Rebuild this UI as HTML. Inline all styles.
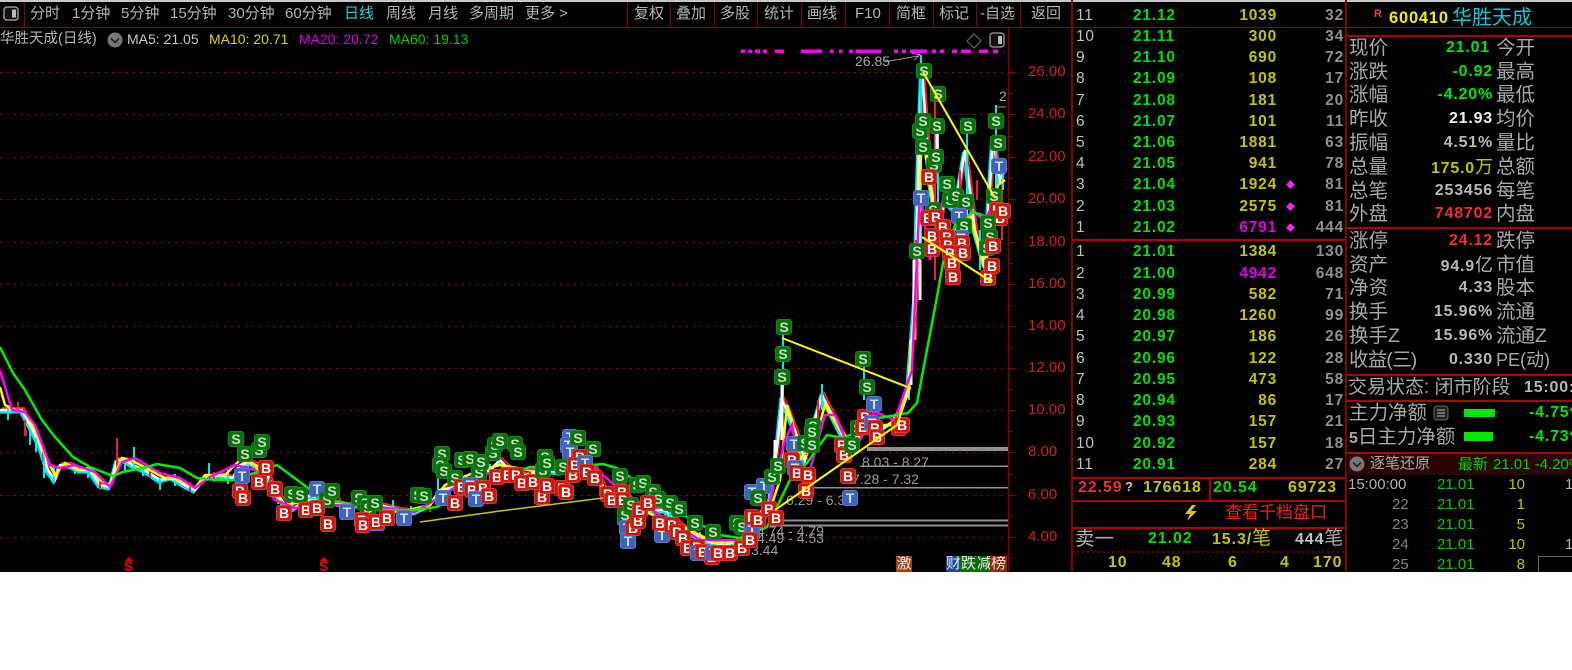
<!DOCTYPE html>
<html><head><meta charset="utf-8"><style>
html,body{margin:0;padding:0;background:#fff}
#p{position:absolute;left:0;top:0;width:1572px;height:670px;overflow:hidden;background:#fff;font-family:"Liberation Sans","WenQuanYi Zen Hei","Noto Sans CJK SC",sans-serif}
#k{position:absolute;left:0;top:0;width:1572px;height:572px;background:#000;overflow:hidden}
.l{position:absolute;background:#8c0000}
.t{position:absolute;white-space:nowrap;line-height:20px;height:20px}
.tb{font-size:15px;color:#b4b4b4;top:4px}
.ra{transform:translateX(-100%)}
.ax{position:absolute;left:1028px;font-size:15px;line-height:20px;color:#d02020}
.ob{position:absolute;left:1073px;width:272px;height:20px;font-size:15.5px;font-weight:bold;line-height:20px;letter-spacing:.8px}
.ob i{position:absolute;font-style:normal;white-space:nowrap}
.ob i:nth-child(1){left:3px;color:#c0c0c0;font-weight:normal}
.ob i:nth-child(2){left:60px;color:#00e000}
.ob i:nth-child(3){right:68px;color:#c4c400}
.ob i:nth-child(4){right:1px;color:#909090}
.ob b{position:absolute;left:213px;color:#ff20ff;font-size:9px}
.mg i:nth-child(3){color:#e000e0}
.c{position:absolute;font-size:19.5px;line-height:24px;color:#a8a8a8;white-space:nowrap;left:1349px}
.c2{left:1496px}
.v{position:absolute;font-size:16px;font-weight:bold;line-height:24px;white-space:nowrap;transform:translateX(-100%);left:1493px;color:#b8b8b8;letter-spacing:.8px}
.tk{position:absolute;font-size:15px;line-height:20px;white-space:nowrap;color:#00d000}
.m{position:absolute;width:14px;height:14px;margin:-8px 0 0 -8px;border-radius:3px;font:bold 14px/14px "Liberation Sans",sans-serif;text-align:center;font-style:normal;border:1px solid}
.S{background:#0b6f0b;border-color:#128a18;color:#c8dcc8}
.B{background:#c8180c;border-color:#e03828;color:#fff}
.T{background:#3c64bc;border-color:#5578d0;color:#d0e0f0}
.lb{position:absolute;font-size:14px;line-height:16px;color:#9a9a9a;white-space:nowrap}
.ch{position:absolute;top:556px;height:16px;font-size:15px;line-height:16px;color:#e8e8e8;text-align:center;overflow:hidden}
.bn{position:absolute;line-height:20px;height:20px;white-space:nowrap;font-size:16px;font-weight:bold;letter-spacing:.9px}
</style></head><body><div id="p"><div id="k">
<div style="position:absolute;left:0;top:0;width:1572px;height:2px;background:#c8c8c8"></div>
<div class="l" style="left:0;top:27px;width:1572px;height:1px"></div>
<div class="l" style="left:24px;top:3px;width:1px;height:24px"></div>
<svg style="position:absolute;left:3px;top:6px" width="17" height="17"><rect x="1" y="1" width="14" height="13" rx="3" fill="#111" stroke="#999" stroke-width="1.5"/><rect x="9" y="3.5" width="4" height="8" fill="#bbb"/></svg>
<span class="t tb" style="left:30px">分时</span><span class="t tb" style="left:72px">1分钟</span><span class="t tb" style="left:121px">5分钟</span><span class="t tb" style="left:170px">15分钟</span><span class="t tb" style="left:228px">30分钟</span><span class="t tb" style="left:285px">60分钟</span><span class="t tb" style="left:344px;color:#20d8d8">日线</span><span class="t tb" style="left:386px">周线</span><span class="t tb" style="left:428px">月线</span><span class="t tb" style="left:469px">多周期</span><span class="t tb" style="left:525px">更多 &gt;</span>
<div class="l" style="left:627px;top:3px;width:1px;height:24px"></div><div class="l" style="left:670px;top:3px;width:1px;height:24px"></div><div class="l" style="left:714px;top:3px;width:1px;height:24px"></div><div class="l" style="left:757px;top:3px;width:1px;height:24px"></div><div class="l" style="left:801px;top:3px;width:1px;height:24px"></div><div class="l" style="left:845px;top:3px;width:1px;height:24px"></div><div class="l" style="left:889px;top:3px;width:1px;height:24px"></div><div class="l" style="left:933px;top:3px;width:1px;height:24px"></div><div class="l" style="left:976px;top:3px;width:1px;height:24px"></div><div class="l" style="left:1020px;top:3px;width:1px;height:24px"></div>
<span class="t tb" style="left:634px">复权</span><span class="t tb" style="left:676px">叠加</span><span class="t tb" style="left:720px">多股</span><span class="t tb" style="left:764px">统计</span><span class="t tb" style="left:807px">画线</span><span class="t tb" style="left:855px">F10</span><span class="t tb" style="left:896px">简框</span><span class="t tb" style="left:939px">标记</span><span class="t tb" style="left:980px">-自选</span><span class="t tb" style="left:1031px">返回</span>

<span class="t" style="left:0;top:29px;font-size:14.5px;color:#b4b4b4">华胜天成(日线)</span>
<svg style="position:absolute;left:107px;top:32px" width="16" height="16"><circle cx="8" cy="8" r="7.5" fill="#777"/><path d="M4 6.5L8 10.5L12 6.5" fill="none" stroke="#222" stroke-width="1.6"/></svg>
<span class="t" style="left:127px;top:29px;font-size:14px;color:#c8c8c8">MA5: 21.05</span>
<span class="t" style="left:209px;top:29px;font-size:14px;color:#d8d800">MA10: 20.71</span>
<span class="t" style="left:299px;top:29px;font-size:14px;color:#e000e0">MA20: 20.72</span>
<span class="t" style="left:389px;top:29px;font-size:14px;color:#00d000">MA60: 19.13</span>

<svg style="position:absolute;left:0;top:0" width="1072" height="572">
<g stroke="#a00000" stroke-width="1" stroke-dasharray="2 5"><path d="M0 72.5H1008M0 114.5H1008M0 157.5H1008M0 199.5H1008M0 242.5H1008M0 284.5H1008M0 326.5H1008M0 368.5H1008M0 410.5H1008M0 452.5H1008M0 495.5H1008M0 537.5H1008"/></g>
<path d="M1008.5 28V572" stroke="#8c0000" stroke-width="1.5"/>
<path d="M1008 72.5h8M1008 93.5h5M1008 114.5h8M1008 136.5h5M1008 157.5h8M1008 178.5h5M1008 199.5h8M1008 221.5h5M1008 242.5h8M1008 263.5h5M1008 284.5h8M1008 305.5h5M1008 326.5h8M1008 347.5h5M1008 368.5h8M1008 389.5h5M1008 410.5h8M1008 431.5h5M1008 452.5h8M1008 474.5h5M1008 495.5h8M1008 516.5h5M1008 537.5h8M1008 558.5h5" stroke="#8c0000" stroke-width="1"/>
<g fill="#ff00ff"><rect x="741" y="49.5" width="4" height="3.5"/><rect x="748" y="49.5" width="4" height="3.5"/><rect x="755" y="49.5" width="5" height="3.5"/><rect x="763" y="49.5" width="4" height="3.5"/><rect x="775" y="49.5" width="9" height="3.5"/><rect x="801" y="49.5" width="21" height="3.5"/><rect x="830" y="49.5" width="3.5" height="3.5"/><rect x="839" y="49.5" width="3.5" height="3.5"/><rect x="849" y="49.5" width="4" height="3.5"/><rect x="856" y="49.5" width="25" height="3.5"/><rect x="894" y="49.5" width="4" height="3.5"/><rect x="902" y="49.5" width="4" height="3.5"/><rect x="910" y="49.5" width="17" height="3.5"/><rect x="932" y="49.5" width="4" height="3.5"/><rect x="940" y="49.5" width="4" height="3.5"/><rect x="952" y="49.5" width="5" height="3.5"/><rect x="961" y="49.5" width="10" height="3.5"/><rect x="979" y="49.5" width="9" height="3.5"/><rect x="993" y="49.5" width="5" height="3.5"/></g>
<path d="M974 34L981 41L974 48L967 41Z" fill="none" stroke="#666" stroke-width="1.2"/>
<rect x="990" y="33" width="14" height="14" rx="3" fill="#111" stroke="#888" stroke-width="1.5"/><rect x="998" y="36" width="4" height="8" fill="#bbb"/>
<g fill="#8f8f8f"><rect x="867" y="447" width="141" height="4"/><rect x="860" y="465.5" width="148" height="1.5"/><rect x="812" y="487" width="196" height="1.5"/><rect x="770" y="519.5" width="238" height="2"/><rect x="770" y="524.5" width="238" height="2"/></g>
<path d="M0 410L15 410L22 410L30 425L40 445L48 470L55 480L60 465L70 465L80 470L90 470L100 485L110 487L117 460L125 460L133 465L145 470L160 480L172 477L185 485L195 490L205 478L220 475L233 478L240 465L250 462L265 470L275 490L285 505L295 508L310 495L325 500L345 505L365 505L380 505L400 510L415 512L430 505L440 490L455 487L470 480L490 470L500 460L510 470L525 475L545 470L560 472L580 465L595 468L605 490L620 500L635 515L650 510L665 510L680 525L695 535L710 542L725 545L740 540L755 520L770 500L778 440L782 400L787 410L795 430L805 460L815 420L822 395L835 420L845 440L855 440L865 420L880 430L895 420L908 390L915 300L919 150L922 70L930 180L938 230L945 200L955 210L965 150L975 230L985 265L993 140L1000 180L1005 170" fill="none" stroke="#00e8f0" stroke-width="3" transform="translate(-1.5,2)"/>
<path d="M0 410L15 410L22 410L30 425L40 445L48 470L55 480L60 465L70 465L80 470L90 470L100 485L110 487L117 460L125 460L133 465L145 470L160 480L172 477L185 485L195 490L205 478L220 475L233 478L240 465L250 462L265 470L275 490L285 505L295 508L310 495L325 500L345 505L365 505L380 505L400 510L415 512L430 505L440 490L455 487L470 480L490 470L500 460L510 470L525 475L545 470L560 472L580 465L595 468L605 490L620 500L635 515L650 510L665 510L680 525L695 535L710 542L725 545L740 540L755 520L770 500L778 440L782 400L787 410L795 430L805 460L815 420L822 395L835 420L845 440L855 440L865 420L880 430L895 420L908 390L915 300L919 150L922 70L930 180L938 230L945 200L955 210L965 150L975 230L985 265L993 140L1000 180L1005 170" fill="none" stroke="#f02020" stroke-width="2" transform="translate(2,-2)"/>
<path d="M0 410L15 410L22 410L30 425L40 445L48 470L55 480L60 465L70 465L80 470L90 470L100 485L110 487L117 460L125 460L133 465L145 470L160 480L172 477L185 485L195 490L205 478L220 475L233 478L240 465L250 462L265 470L275 490L285 505L295 508L310 495L325 500L345 505L365 505L380 505L400 510L415 512L430 505L440 490L455 487L470 480L490 470L500 460L510 470L525 475L545 470L560 472L580 465L595 468L605 490L620 500L635 515L650 510L665 510L680 525L695 535L710 542L725 545L740 540L755 520L770 500L778 440L782 400L787 410L795 430L805 460L815 420L822 395L835 420L845 440L855 440L865 420L880 430L895 420L908 390L915 300L919 150L922 70L930 180L938 230L945 200L955 210L965 150L975 230L985 265L993 140L1000 180L1005 170" fill="none" stroke="#fff" stroke-width="2.5"/>
<g fill="none" stroke-width="2">
<g stroke="#f02020"><path d="M117 438V470M26 430V436M18 402V412M25 420V436M43 450V462M68 462V470M100 478V490M150 468V478M190 482V492M214 472V482M270 478V488M340 498V508M430 498V512M475 468V480M530 466V476M560 462V476M600 482V496M782 380V420M818 400V420M916 240V340M935 100V280M1002 180V240M977 180V200M960 170V240M806 440V455"/></g>
<g stroke="#00e8f0"><path d="M134 447V470M8 405V420M30 428V445M36 438V452M44 452V478M54 465V482M75 465V474M88 468V478M125 460V472M143 465V476M160 478V490M175 474V486M209 463V480M228 470V484M248 455V468M278 490V504M292 500V512M327 498V508M393 500V512M411 506V516M438 478V494M455 482V494M490 464V476M520 470V482M578 458V470M612 490V504M640 505V516M670 512V522M700 532V545M783 330V395M822 384V410M864 360V400M921 55V250M938 130V210M967 130V240M996 105V200M1003 160V190M909 380V400M980 230V270"/></g>
<g stroke="#fff" stroke-width="3"><path d="M782 385V440M919 150V260M914 260V340M911 340V385M937 130V160M920 260V300M966 200V225M775 440V470"/></g>
</g>
<path d="M0 387L5 405L15 410L25 412L35 430L45 455L55 475L65 463L78 470L90 468L100 480L110 485L122 458L135 462L150 470L165 478L180 480L195 488L205 475L225 475L240 460L255 465L270 488L285 505L310 500L345 505L400 512L430 505L445 485L480 470L500 465L540 472L580 465L600 485L640 510L680 525L715 543L745 540L770 510L780 480L787 405L792 420L800 460L815 440L825 405L840 430L855 445L865 425L890 425L908 395L915 310L922 130L935 220L950 235L970 215L985 270L998 185L1005 180" fill="none" stroke="#ffff00" stroke-width="2.5"/>
<path d="M0 370L12 410L25 412L35 425L50 465L60 468L75 465L95 472L110 487L122 462L135 458L160 473L180 478L195 488L210 477L235 465L255 470L275 500L295 508L330 505L380 507L415 512L435 500L470 478L510 468L560 470L595 468L620 490L660 515L700 540L745 540L765 520L785 440L792 425L800 470L810 470L825 415L835 415L850 450L860 440L875 412L895 420L912 370L920 190L930 260L945 190L970 210L985 220L995 200" fill="none" stroke="#ff00ff" stroke-width="2.5"/>
<path d="M0 347L13 373L25 390L42 420L55 437L73 457L90 467L113 476L123 472L147 467L157 464L180 468L197 478L217 480L233 480L258 472L277 465L308 488L320 500L340 502L377 510L413 510L437 507L487 482L530 467L570 467L603 464L617 468L653 493L687 517L720 535L740 538L767 527L790 480L807 463L827 435L843 438L857 432L867 420L908 413L917 403L927 350L937 297L943 263L955 225L973 212L997 220" fill="none" stroke="#00f000" stroke-width="2.5"/>
<path d="M884 62L918 56M912 53L920 55L914 60" fill="none" stroke="#999" stroke-width="1"/>
<path d="M996 107H1006" stroke="#999" stroke-width="1"/>
<g fill="#f00000"><path d="M129 557l4 4h-8zM324 557l4 4h-8z"/></g>
</svg>
<span class="lb" style="left:855px;top:53px;color:#a8a8a8">26.85</span>
<span class="lb" style="left:999px;top:88px;color:#a8a8a8">2</span>
<span class="lb" style="left:862px;top:454px">8.03 - 8.27</span>
<span class="lb" style="left:852px;top:471px">7.28 - 7.32</span>
<span class="lb" style="left:786px;top:492px">6.29 - 6.3</span>
<span class="lb" style="left:757px;top:523px">4.74 - 4.79</span>
<span class="lb" style="left:757px;top:530px">4.49 - 4.53</span>
<span class="lb" style="left:751px;top:542px">3.44</span>
<span class="t" style="left:124px;top:556px;font-size:14px;font-weight:bold;color:#f00000">S</span>
<span class="t" style="left:319px;top:556px;font-size:14px;font-weight:bold;color:#f00000">S</span>
<div class="ch" style="left:896px;width:16px;background:#a04010">激</div>
<div class="ch" style="left:946px;width:14px;background:#1a4a90">财</div>
<div class="ch" style="left:960px;width:17px;background:#106a10">跌</div>
<div class="ch" style="left:977px;width:13px;background:#106a10">减</div>
<div class="ch" style="left:990px;width:17px;background:#902810">榜</div>
<div id="mk">
<i class="m S" style="left:236px;top:439px">S</i><i class="m S" style="left:259px;top:450px">S</i><i class="m S" style="left:245px;top:454px">S</i><i class="m S" style="left:262px;top:442px">S</i><i class="m B" style="left:240px;top:491px">B</i><i class="m T" style="left:242px;top:476px">T</i><i class="m B" style="left:243px;top:498px">B</i><i class="m B" style="left:259px;top:482px">B</i><i class="m B" style="left:266px;top:468px">B</i><i class="m B" style="left:275px;top:489px">B</i><i class="m S" style="left:292px;top:494px">S</i><i class="m S" style="left:300px;top:495px">S</i><i class="m T" style="left:317px;top:489px">T</i><i class="m S" style="left:327px;top:500px">S</i><i class="m S" style="left:332px;top:491px">S</i><i class="m B" style="left:284px;top:513px">B</i><i class="m B" style="left:306px;top:510px">B</i><i class="m B" style="left:317px;top:508px">B</i><i class="m B" style="left:328px;top:524px">B</i>
<i class="m S" style="left:359px;top:498px">S</i><i class="m S" style="left:365px;top:503px">S</i><i class="m S" style="left:368px;top:508px">S</i><i class="m S" style="left:375px;top:503px">S</i><i class="m T" style="left:347px;top:512px">T</i><i class="m B" style="left:362px;top:520px">B</i><i class="m B" style="left:363px;top:525px">B</i><i class="m T" style="left:377px;top:523px">T</i><i class="m B" style="left:376px;top:522px">B</i><i class="m B" style="left:387px;top:518px">B</i><i class="m T" style="left:404px;top:518px">T</i><i class="m S" style="left:418px;top:495px">S</i><i class="m S" style="left:424px;top:496px">S</i>
<i class="m S" style="left:442px;top:454px">S</i><i class="m S" style="left:440px;top:465px">S</i><i class="m S" style="left:444px;top:471px">S</i><i class="m S" style="left:455px;top:478px">S</i><i class="m S" style="left:462px;top:460px">S</i><i class="m S" style="left:470px;top:459px">S</i><i class="m S" style="left:479px;top:473px">S</i><i class="m S" style="left:481px;top:462px">S</i><i class="m T" style="left:443px;top:498px">T</i><i class="m B" style="left:455px;top:503px">B</i><i class="m B" style="left:462px;top:487px">B</i><i class="m T" style="left:470px;top:485px">T</i><i class="m B" style="left:472px;top:490px">B</i><i class="m B" style="left:483px;top:488px">B</i><i class="m T" style="left:476px;top:499px">T</i><i class="m B" style="left:489px;top:496px">B</i>
<i class="m S" style="left:493px;top:453px">S</i><i class="m S" style="left:495px;top:445px">S</i><i class="m S" style="left:500px;top:441px">S</i><i class="m S" style="left:515px;top:444px">S</i><i class="m S" style="left:518px;top:452px">S</i><i class="m B" style="left:497px;top:477px">B</i><i class="m B" style="left:508px;top:475px">B</i><i class="m B" style="left:516px;top:475px">B</i><i class="m B" style="left:522px;top:483px">B</i><i class="m B" style="left:533px;top:482px">B</i><i class="m B" style="left:542px;top:497px">B</i><i class="m S" style="left:545px;top:457px">S</i><i class="m S" style="left:543px;top:470px">S</i><i class="m S" style="left:547px;top:463px">S</i><i class="m B" style="left:547px;top:486px">B</i><i class="m B" style="left:562px;top:488px">B</i><i class="m B" style="left:566px;top:492px">B</i>
<i class="m T" style="left:570px;top:437px">T</i><i class="m T" style="left:568px;top:445px">T</i><i class="m T" style="left:570px;top:452px">T</i><i class="m S" style="left:578px;top:438px">S</i><i class="m S" style="left:593px;top:449px">S</i><i class="m S" style="left:563px;top:467px">S</i><i class="m B" style="left:580px;top:457px">B</i><i class="m B" style="left:573px;top:475px">B</i><i class="m B" style="left:575px;top:465px">B</i><i class="m T" style="left:585px;top:463px">T</i><i class="m B" style="left:587px;top:472px">B</i><i class="m B" style="left:595px;top:478px">B</i>
<i class="m S" style="left:620px;top:476px">S</i><i class="m S" style="left:637px;top:485px">S</i><i class="m S" style="left:643px;top:483px">S</i><i class="m S" style="left:653px;top:492px">S</i><i class="m S" style="left:658px;top:499px">S</i><i class="m S" style="left:670px;top:503px">S</i><i class="m S" style="left:679px;top:509px">S</i><i class="m S" style="left:695px;top:523px">S</i><i class="m S" style="left:713px;top:532px">S</i><i class="m S" style="left:737px;top:523px">S</i><i class="m S" style="left:742px;top:527px">S</i>
<i class="m B" style="left:608px;top:494px">B</i><i class="m B" style="left:612px;top:500px">B</i><i class="m B" style="left:622px;top:492px">B</i><i class="m B" style="left:623px;top:500px">B</i><i class="m T" style="left:625px;top:518px">T</i><i class="m S" style="left:625px;top:515px">S</i><i class="m T" style="left:627px;top:528px">T</i><i class="m T" style="left:628px;top:541px">T</i><i class="m B" style="left:633px;top:528px">B</i><i class="m B" style="left:638px;top:521px">B</i><i class="m S" style="left:631px;top:505px">S</i><i class="m B" style="left:640px;top:510px">B</i><i class="m B" style="left:648px;top:503px">B</i>
<i class="m T" style="left:662px;top:535px">T</i><i class="m B" style="left:660px;top:523px">B</i><i class="m B" style="left:672px;top:525px">B</i><i class="m B" style="left:677px;top:532px">B</i><i class="m B" style="left:683px;top:538px">B</i><i class="m B" style="left:688px;top:548px">B</i><i class="m B" style="left:697px;top:547px">B</i><i class="m T" style="left:698px;top:553px">T</i><i class="m B" style="left:703px;top:552px">B</i><i class="m B" style="left:712px;top:557px">B</i><i class="m T" style="left:713px;top:553px">T</i><i class="m B" style="left:718px;top:553px">B</i><i class="m B" style="left:730px;top:553px">B</i><i class="m B" style="left:742px;top:548px">B</i>
<i class="m S" style="left:784px;top:327px">S</i><i class="m S" style="left:783px;top:354px">S</i><i class="m S" style="left:782px;top:377px">S</i><i class="m S" style="left:863px;top:359px">S</i><i class="m S" style="left:867px;top:387px">S</i>
<i class="m T" style="left:752px;top:492px">T</i><i class="m T" style="left:764px;top:486px">T</i><i class="m S" style="left:758px;top:498px">S</i><i class="m S" style="left:772px;top:477px">S</i><i class="m S" style="left:778px;top:466px">S</i><i class="m T" style="left:794px;top:444px">T</i><i class="m B" style="left:792px;top:460px">B</i><i class="m T" style="left:795px;top:468px">T</i><i class="m B" style="left:797px;top:473px">B</i><i class="m B" style="left:808px;top:475px">B</i><i class="m B" style="left:806px;top:491px">B</i><i class="m S" style="left:805px;top:443px">S</i><i class="m S" style="left:813px;top:426px">S</i><i class="m S" style="left:812px;top:432px">S</i><i class="m S" style="left:812px;top:445px">S</i>
<i class="m B" style="left:842px;top:445px">B</i><i class="m B" style="left:844px;top:455px">B</i><i class="m B" style="left:848px;top:476px">B</i><i class="m T" style="left:850px;top:498px">T</i><i class="m S" style="left:852px;top:445px">S</i><i class="m S" style="left:858px;top:428px">S</i><i class="m B" style="left:865px;top:417px">B</i><i class="m B" style="left:863px;top:427px">B</i><i class="m T" style="left:872px;top:423px">T</i><i class="m T" style="left:874px;top:404px">T</i><i class="m B" style="left:875px;top:428px">B</i><i class="m B" style="left:877px;top:437px">B</i><i class="m B" style="left:899px;top:428px">B</i><i class="m B" style="left:902px;top:425px">B</i>
<i class="m T" style="left:752px;top:530px">T</i><i class="m B" style="left:752px;top:517px">B</i><i class="m B" style="left:758px;top:520px">B</i><i class="m B" style="left:769px;top:509px">B</i><i class="m B" style="left:776px;top:518px">B</i><i class="m B" style="left:750px;top:540px">B</i>
<i class="m S" style="left:924px;top:71px">S</i><i class="m S" style="left:938px;top:94px">S</i><i class="m S" style="left:920px;top:131px">S</i><i class="m S" style="left:923px;top:121px">S</i><i class="m S" style="left:937px;top:126px">S</i><i class="m S" style="left:923px;top:147px">S</i><i class="m S" style="left:934px;top:165px">S</i><i class="m S" style="left:936px;top:157px">S</i><i class="m S" style="left:968px;top:126px">S</i><i class="m S" style="left:996px;top:121px">S</i><i class="m S" style="left:998px;top:143px">S</i><i class="m B" style="left:929px;top:177px">B</i><i class="m S" style="left:947px;top:184px">S</i><i class="m S" style="left:950px;top:200px">S</i><i class="m S" style="left:956px;top:196px">S</i><i class="m S" style="left:966px;top:202px">S</i><i class="m S" style="left:933px;top:210px">S</i><i class="m T" style="left:921px;top:198px">T</i><i class="m T" style="left:999px;top:166px">T</i><i class="m B" style="left:928px;top:218px">B</i><i class="m B" style="left:936px;top:217px">B</i><i class="m T" style="left:959px;top:216px">T</i><i class="m B" style="left:943px;top:227px">B</i><i class="m S" style="left:964px;top:226px">S</i><i class="m B" style="left:932px;top:236px">B</i><i class="m T" style="left:961px;top:238px">T</i><i class="m B" style="left:947px;top:237px">B</i><i class="m B" style="left:948px;top:245px">B</i><i class="m B" style="left:962px;top:243px">B</i><i class="m B" style="left:932px;top:249px">B</i><i class="m S" style="left:917px;top:251px">S</i><i class="m B" style="left:950px;top:253px">B</i><i class="m B" style="left:963px;top:253px">B</i><i class="m B" style="left:952px;top:263px">B</i><i class="m B" style="left:953px;top:277px">B</i><i class="m S" style="left:994px;top:196px">S</i><i class="m B" style="left:997px;top:210px">B</i><i class="m B" style="left:1000px;top:218px">B</i><i class="m B" style="left:1003px;top:211px">B</i><i class="m S" style="left:988px;top:223px">S</i><i class="m S" style="left:990px;top:237px">S</i><i class="m S" style="left:987px;top:248px">S</i><i class="m B" style="left:993px;top:246px">B</i><i class="m B" style="left:988px;top:278px">B</i><i class="m B" style="left:992px;top:266px">B</i>
</div>
<svg style="position:absolute;left:0;top:0;pointer-events:none" width="1008" height="572"><g fill="none" stroke="#ffff00" stroke-width="2"><path d="M782 338L910 388L897 425L775 510M923 72L995 198M922 237L992 282"/></g><path d="M420 522L500 511L603 498" fill="none" stroke="#c8c800" stroke-width="1.5"/></svg>

<span class="ax" style="top:62px">26.00</span><span class="ax" style="top:104px">24.00</span><span class="ax" style="top:147px">22.00</span><span class="ax" style="top:189px">20.00</span><span class="ax" style="top:232px">18.00</span><span class="ax" style="top:274px">16.00</span><span class="ax" style="top:316px">14.00</span><span class="ax" style="top:358px">12.00</span><span class="ax" style="top:400px">10.00</span><span class="ax" style="top:442px">8.00</span><span class="ax" style="top:485px">6.00</span><span class="ax" style="top:527px">4.00</span>

<div class="l" style="left:1071px;top:0;width:1.5px;height:572px"></div>
<div class="l" style="left:1345px;top:0;width:1.5px;height:572px"></div>
<div class="ob" style="top:6px"><i>11</i><i>21.12</i><i>1039</i><i>32</i></div>
<div class="ob" style="top:27px"><i>10</i><i>21.11</i><i>300</i><i>34</i></div>
<div class="ob" style="top:48px"><i>9</i><i>21.10</i><i>690</i><i>72</i></div>
<div class="ob" style="top:69px"><i>8</i><i>21.09</i><i>108</i><i>17</i></div>
<div class="ob" style="top:91px"><i>7</i><i>21.08</i><i>181</i><i>20</i></div>
<div class="ob" style="top:112px"><i>6</i><i>21.07</i><i>101</i><i>11</i></div>
<div class="ob" style="top:133px"><i>5</i><i>21.06</i><i>1881</i><i>63</i></div>
<div class="ob" style="top:154px"><i>4</i><i>21.05</i><i>941</i><i>78</i></div>
<div class="ob" style="top:175px"><i>3</i><i>21.04</i><i>1924</i><i>81</i><b>◆</b></div>
<div class="ob" style="top:197px"><i>2</i><i>21.03</i><i>2575</i><i>81</i><b>◆</b></div>
<div class="ob mg" style="top:218px"><i>1</i><i>21.02</i><i>6791</i><i>444</i><b>◆</b></div>
<div class="l" style="left:1072px;top:239px;width:273px;height:1.5px;background:#b00000"></div>
<div class="ob" style="top:242px"><i>1</i><i>21.01</i><i>1384</i><i>130</i></div>
<div class="ob mg" style="top:264px"><i>2</i><i>21.00</i><i>4942</i><i>648</i></div>
<div class="ob" style="top:285px"><i>3</i><i>20.99</i><i>582</i><i>71</i></div>
<div class="ob" style="top:306px"><i>4</i><i>20.98</i><i>1260</i><i>99</i></div>
<div class="ob" style="top:327px"><i>5</i><i>20.97</i><i>186</i><i>26</i></div>
<div class="ob" style="top:349px"><i>6</i><i>20.96</i><i>122</i><i>28</i></div>
<div class="ob" style="top:370px"><i>7</i><i>20.95</i><i>473</i><i>58</i></div>
<div class="ob" style="top:391px"><i>8</i><i>20.94</i><i>86</i><i>17</i></div>
<div class="ob" style="top:412px"><i>9</i><i>20.93</i><i>157</i><i>21</i></div>
<div class="ob" style="top:434px"><i>10</i><i>20.92</i><i>157</i><i>18</i></div>
<div class="ob" style="top:455px"><i>11</i><i>20.91</i><i>284</i><i>27</i></div>
<div class="l" style="left:1072px;top:477px;width:273px;height:1.5px;background:#b00000"></div>
<div class="l" style="left:1072px;top:500px;width:273px;height:1.5px;background:#b00000"></div>
<div class="l" style="left:1209px;top:477px;width:1.5px;height:23px;background:#b00000"></div>
<div class="l" style="left:1072px;top:527px;width:273px;height:1.5px;background:#b00000"></div>
<span class="bn" style="left:1078px;top:478px;color:#f03030">22.59</span>
<span class="t" style="left:1125px;top:477px;font-size:13px;font-weight:bold;color:#c8c8c8">?</span>
<span class="bn" style="left:1143px;top:478px;color:#c4c400">176618</span>
<span class="bn" style="left:1213px;top:478px;color:#00e000">20.54</span>
<span class="bn" style="left:1288px;top:478px;color:#c4c400">69723</span>
<svg style="position:absolute;left:1183px;top:504px" width="16" height="18"><path d="M9 1L2 10H7L4 17L14 7H8L13 1Z" fill="#d8c020"/></svg>
<span class="t" style="left:1225px;top:503px;font-size:17px;color:#f02020">查看千档盘口</span>
<span class="t" style="left:1075px;top:529px;font-size:19.5px;color:#b0b0b0">卖一</span>
<span class="bn" style="left:1148px;top:529px;color:#00e000">21.02</span>
<span class="bn" style="left:1212px;top:529px;color:#c4c400">15.3/<span style="font-weight:normal;font-size:19px;letter-spacing:0">笔</span></span>
<span class="bn" style="left:1295px;top:529px;color:#c0c0c0">444<span style="font-weight:normal;font-size:19px;color:#a8a8a8;letter-spacing:0">笔</span></span>
<svg style="position:absolute;left:1072px;top:551px" width="273" height="2"><path d="M0 1H273" stroke="#c00000" stroke-dasharray="2 3"/></svg>
<span class="bn" style="left:1108px;top:553px;color:#c4c400">10</span><span class="bn" style="left:1162px;top:553px;color:#c4c400">48</span><span class="bn" style="left:1228px;top:553px;color:#c4c400">6</span><span class="bn" style="left:1280px;top:553px;color:#c4c400">4</span><span class="bn" style="left:1313px;top:553px;color:#c4c400">170</span>

<span class="t" style="left:1374px;top:4px;font-size:11px;font-weight:bold;color:#f04040">R</span>
<span class="t" style="left:1389px;top:8px;font-size:16.5px;font-weight:bold;color:#f0f000;letter-spacing:.8px">600410</span>
<span class="t" style="left:1452px;top:6px;font-size:20px;line-height:24px;height:24px;color:#10c8d8">华胜天成</span>
<div class="l" style="left:1346px;top:35px;width:226px;height:1.5px;background:#b00000"></div>
<span class="c" style="top:36px">现价</span><span class="c" style="top:60px">涨跌</span><span class="c" style="top:83px">涨幅</span><span class="c" style="top:107px">昨收</span><span class="c" style="top:131px">振幅</span><span class="c" style="top:155px">总量</span><span class="c" style="top:179px">总笔</span><span class="c" style="top:202px">外盘</span>
<span class="c c2" style="top:36px">今开</span><span class="c c2" style="top:60px">最高</span><span class="c c2" style="top:83px">最低</span><span class="c c2" style="top:107px">均价</span><span class="c c2" style="top:131px">量比</span><span class="c c2" style="top:155px">总额</span><span class="c c2" style="top:179px">每笔</span><span class="c c2" style="top:202px">内盘</span>
<span class="v" style="top:36px;left:1490px;color:#00e800">21.01</span><span class="v" style="top:60px;color:#00e800">-0.92</span><span class="v" style="top:83px;color:#00e800">-4.20%</span><span class="v" style="top:107px;color:#f0f0f0">21.93</span><span class="v" style="top:131px">4.51%</span><span class="v" style="top:155px;color:#c4c400">175.0<span style="font-weight:normal;font-size:18px;letter-spacing:0">万</span></span><span class="v" style="top:179px">253456</span><span class="v" style="top:202px;color:#f03030">748702</span>
<div class="l" style="left:1346px;top:227px;width:226px;height:1.5px;background:#b00000"></div>
<span class="c" style="top:229px">涨停</span><span class="c" style="top:253px">资产</span><span class="c" style="top:276px">净资</span><span class="c" style="top:300px">换手</span><span class="c" style="top:324px">换手Z</span><span class="c" style="top:348px;letter-spacing:-.8px">收益(三)</span>
<span class="c c2" style="top:229px">跌停</span><span class="c c2" style="top:253px">市值</span><span class="c c2" style="top:276px">股本</span><span class="c c2" style="top:300px">流通</span><span class="c c2" style="top:324px">流通Z</span><span class="c c2" style="top:348px;font-size:18px">PE(动)</span>
<span class="v" style="top:229px;color:#f03030">24.12</span><span class="v" style="top:253px">94.9<span style="font-weight:normal;font-size:18px;letter-spacing:0">亿</span></span><span class="v" style="top:276px">4.33</span><span class="v" style="top:300px">15.96%</span><span class="v" style="top:324px">15.96%</span><span class="v" style="top:348px">0.330</span>
<div class="l" style="left:1346px;top:374px;width:226px;height:1.5px;background:#b00000"></div>
<span class="c" style="top:376px;left:1348px;font-size:19px">交易状态: 闭市阶段</span>
<span class="v" style="top:376px;left:1524px;transform:none">15:00:</span>
<div class="l" style="left:1346px;top:400px;width:226px;height:1.5px;background:#b00000"></div>
<span class="c" style="top:401px">主力净额</span>
<svg style="position:absolute;left:1433px;top:405px" width="16" height="16"><rect x="1" y="1" width="14" height="14" rx="3" fill="#222" stroke="#666"/><path d="M4 5H12M4 8H12M4 11H12" stroke="#999" stroke-width="1.2"/></svg>
<div style="position:absolute;left:1464px;top:409px;width:31px;height:8px;background:#00e800"></div>
<span class="v" style="top:401px;left:1529px;transform:none;color:#00e800">-4.75亿</span>
<span class="c" style="top:425px"><b style="font-size:16px">5</b>日主力净额</span>
<div style="position:absolute;left:1464px;top:432px;width:29px;height:9px;background:#00e800"></div>
<span class="v" style="top:425px;left:1529px;transform:none;color:#00e800">-4.73亿</span>
<div class="l" style="left:1346px;top:452px;width:226px;height:1.5px;background:#b00000"></div>
<div style="position:absolute;left:1346px;top:454px;width:226px;height:21px;background:#2a0606"></div>
<svg style="position:absolute;left:1349px;top:456px" width="16" height="16"><circle cx="8" cy="8" r="7.5" fill="#777"/><path d="M4 6.5L8 10.5L12 6.5" fill="none" stroke="#222" stroke-width="1.6"/></svg>
<span class="tk" style="left:1370px;top:454px;color:#a8a8a8">逐笔还原</span>
<span class="tk" style="left:1458px;top:455px">最新</span><span class="tk" style="left:1493px;top:455px">21.01 -4.20%</span>
<span class="tk" style="left:1348px;top:475px;color:#b0b0b0">15:00:00</span><span class="tk" style="left:1437px;top:475px">21.01</span><span class="tk ra" style="left:1525px;top:475px;color:#c4c400">10</span><span class="tk" style="left:1565px;top:475px;color:#b0b0b0">1</span>
<span class="tk" style="left:1392px;top:495px;color:#808080">22</span><span class="tk" style="left:1437px;top:495px">21.01</span><span class="tk ra" style="left:1525px;top:495px;color:#c4c400">1</span>
<span class="tk" style="left:1392px;top:515px;color:#808080">23</span><span class="tk" style="left:1437px;top:515px">21.01</span><span class="tk ra" style="left:1525px;top:515px;color:#c4c400">5</span>
<span class="tk" style="left:1392px;top:535px;color:#808080">24</span><span class="tk" style="left:1437px;top:535px">21.01</span><span class="tk ra" style="left:1525px;top:535px;color:#c4c400">10</span><span class="tk" style="left:1565px;top:535px;color:#b0b0b0">1</span>
<span class="tk" style="left:1392px;top:555px;color:#808080">25</span><span class="tk" style="left:1437px;top:555px">21.01</span><span class="tk ra" style="left:1525px;top:555px;color:#c4c400">8</span>
<div style="position:absolute;left:1538px;top:556px;width:40px;height:20px;border:1px solid #666"></div>
</div></div></body></html>
